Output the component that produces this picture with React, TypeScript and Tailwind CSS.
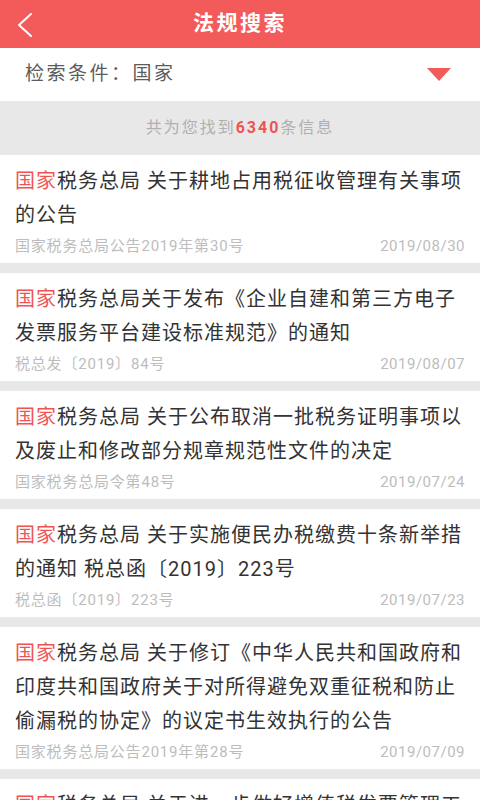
import { Fragment } from "react";

interface Item {
  title: string;
  source: string;
  date: string;
}

const items: Item[] = [
  {
    title: "税务总局 关于耕地占用税征收管理有关事项的公告",
    source: "国家税务总局公告2019年第30号",
    date: "2019/08/30",
  },
  {
    title: "税务总局关于发布《企业自建和第三方电子发票服务平台建设标准规范》的通知",
    source: "税总发〔2019〕84号",
    date: "2019/08/07",
  },
  {
    title: "税务总局 关于公布取消一批税务证明事项以及废止和修改部分规章规范性文件的决定",
    source: "国家税务总局令第48号",
    date: "2019/07/24",
  },
  {
    title: "税务总局 关于实施便民办税缴费十条新举措的通知 税总函〔2019〕223号",
    source: "税总函〔2019〕223号",
    date: "2019/07/23",
  },
  {
    title: "税务总局 关于修订《中华人民共和国政府和印度共和国政府关于对所得避免双重征税和防止偷漏税的协定》的议定书生效执行的公告",
    source: "国家税务总局公告2019年第28号",
    date: "2019/07/09",
  },
  {
    title: "税务总局 关于进一步做好增值税发票管理工作的通知",
    source: "税总函〔2019〕210号",
    date: "2019/06/28",
  },
];

function ResultRow({ item }: { item: Item }) {
  return (
    <div className="bg-white px-[15px] pt-[9px] pb-[8px] mb-[10px]">
      <p className="text-[20px] leading-[34px] tracking-[1px] text-[#333]">
        <span className="text-[#ef5454]">国家</span>
        {item.title}
      </p>
      <div className="mt-[5px] flex items-center justify-between text-[15px] leading-[18px] tracking-[0.8px] text-[#bdbdbd]">
        <span>{item.source}</span>
        <span className="tracking-[0.5px]">{item.date}</span>
      </div>
    </div>
  );
}

export default function App() {
  return (
    <div
      className="w-[480px] h-[800px] overflow-hidden bg-[#e8e8e8]"
      style={{ fontFamily: 'Roboto, "Noto Sans CJK SC", sans-serif' }}
    >
      <header className="relative h-[48px] bg-[#f35b5b] flex items-center justify-center">
        <button className="absolute left-[14px] top-[12px] p-0">
          <svg width="22" height="26" viewBox="0 0 22 26" fill="none">
            <polyline
              points="17,2 5,13 17,24"
              stroke="#fff"
              strokeWidth="2"
              strokeLinecap="round"
              strokeLinejoin="round"
            />
          </svg>
        </button>
        <h1 className="text-[21px] font-bold tracking-[2.5px] text-white">法规搜索</h1>
      </header>

      <div className="h-[53px] bg-white flex items-center justify-between pl-[25px] pr-[29px]">
        <span className="text-[19px] tracking-[2.5px] text-[#5c5c5c]">检索条件：国家</span>
        <svg width="24" height="13" viewBox="0 0 24 13">
          <polygon points="0,0 24,0 12,13" fill="#f35b5b" />
        </svg>
      </div>

      <div className="h-[54px] flex items-center justify-center text-[16px] tracking-[2px] text-[#b0b0b0]">
        共为您找到<span className="font-bold text-[#ef5454]">6340</span>条信息
      </div>

      {items.map((item, i) => (
        <Fragment key={i}>
          <ResultRow item={item} />
        </Fragment>
      ))}
    </div>
  );
}
